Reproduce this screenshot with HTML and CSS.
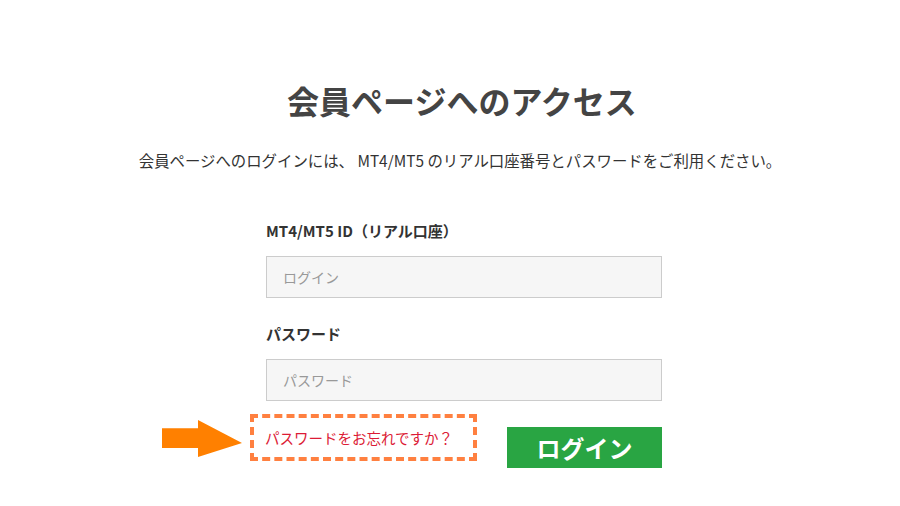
FILE: index.html
```html
<!DOCTYPE html>
<html lang="ja">
<head>
  <meta charset="UTF-8">
  <meta name="viewport" content="width=device-width, initial-scale=1.0">
  <title>会員ページへのアクセス</title>
  <link rel="stylesheet" href="styles.css">
</head>
<body>
  <div class="container">
    <h1 class="title">会員ページへのアクセス</h1>
    <p class="lead">会員ページへのログインには、 MT4/MT5 のリアル口座番号とパスワードをご利用ください。</p>
    <form class="login-form">
      <label for="loginId">MT4/MT5 ID（リアル口座）</label>
      <input type="text" id="loginId" name="login" placeholder="ログイン">

      <label for="password">パスワード</label>
      <input type="password" id="password" name="password" placeholder="パスワード">

      <div class="form-footer">
        <div class="forgot-box">
          <span class="arrow"></span>
          <a href="#" class="forgot">パスワードをお忘れですか？</a>
        </div>
        <button type="submit" class="btn-login">ログイン</button>
      </div>
    </form>
  </div>
</body>
</html>
```

FILE: styles.css
```css
body {
  font-family: "Noto Sans CJK JP", "Noto Sans", sans-serif;
  margin: 0;
  padding: 0;
  background-color: #fff;
  color: #333;
}
.container {
  padding: 77px 0 0 28px;
  display: flex;
  flex-direction: column;
  align-items: center;
}
.title {
  margin: 0 0 0 -4px;
  font-size: 32px;
  line-height: 46px;
  font-weight: bold;
  color: #444;
}
.lead {
  margin: 25px 0 0 -8px;
  font-size: 15.4px;
  line-height: 24px;
  color: #333;
}
.login-form {
  width: 396px;
  margin-top: 47px;
  display: flex;
  flex-direction: column;
}
.login-form label {
  font-size: 15px;
  line-height: 24px;
  font-weight: bold;
  color: #333;
  margin-bottom: 13px;
}
.login-form input {
  height: 42px;
  box-sizing: border-box;
  padding: 0 16px;
  border: 1px solid #ccc;
  background-color: #f6f6f6;
  font-family: inherit;
  font-size: 14px;
  color: #333;
  margin-bottom: 24px;
}
.login-form input:last-of-type {
  margin-bottom: 13px;
}
.login-form input::placeholder {
  color: #999;
}
.form-footer {
  display: flex;
  justify-content: space-between;
  align-items: flex-start;
}
.forgot-box {
  position: relative;
  margin-left: -16px;
  width: 227px;
  height: 47px;
  box-sizing: border-box;
  border: 4px dashed #ff8040;
  display: flex;
  align-items: center;
  padding-left: 11px;
}
.forgot {
  font-size: 14.5px;
  color: #dc1b36;
  text-decoration: none;
}
.arrow {
  position: absolute;
  right: calc(100% + 12px);
  top: 2px;
  width: 80px;
  height: 37px;
  background-color: #ff8000;
  clip-path: polygon(0 22%, 45% 22%, 45% 0, 100% 62%, 100% 62%, 45% 100%, 45% 76%, 0 76%);
}
.btn-login {
  margin-top: 13px;
  width: 155px;
  height: 41px;
  border: none;
  background-color: #29a543;
  color: #fff;
  font-family: inherit;
  font-size: 24px;
  font-weight: bold;
  cursor: pointer;
}
```
